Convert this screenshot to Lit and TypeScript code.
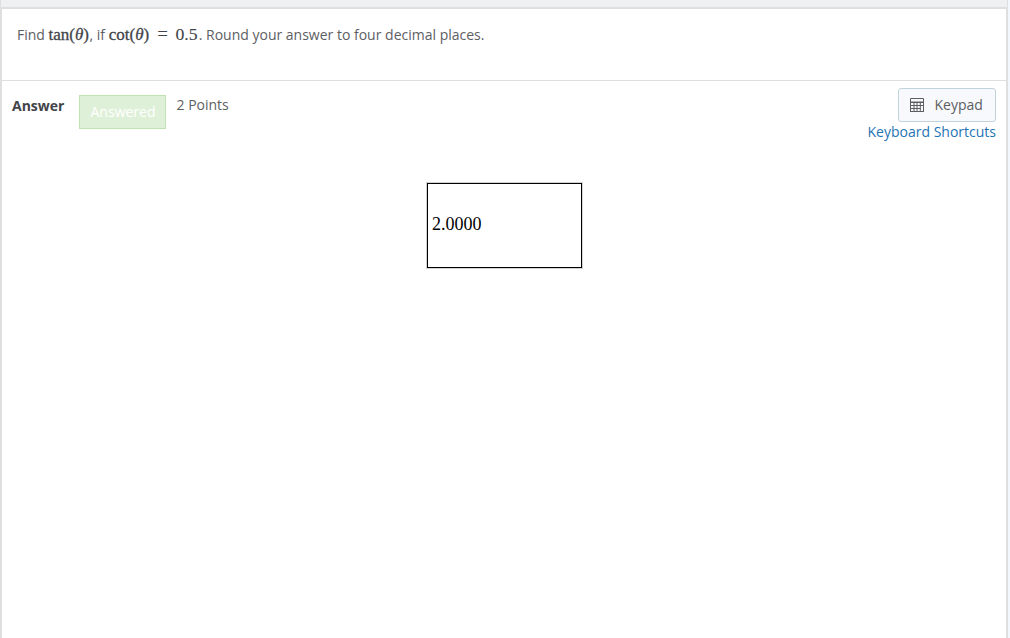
import { LitElement, html, css } from 'lit';
import { customElement, property } from 'lit/decorators.js';

@customElement('calc-icon')
class CalcIcon extends LitElement {
    static styles = css`
        :host {
            display: block;
            width: 14px;
            height: 14px;
        }

        svg {
            display: block;
        }
    `;

    render() {
        return html`
            <svg width="14" height="14" viewBox="0 0 14 14" fill="none">
                <path
                    d="M.5 .5h13v13H.5zM.5 4.5h13M.5 7.5h13M.5 10.5h10M4 4.5v9M7 4.5v9M10.3 4.5v9"
                    stroke="#5d5e63"
                />
                <path d="M0 4h14M0 13.5h14" stroke="#5d5e63" />
            </svg>
        `;
    }
}

@customElement('answer-bar')
class AnswerBar extends LitElement {
    @property({ type: Number }) points = 0;

    static styles = css`
        :host {
            display: flex;
            align-items: flex-start;
            padding: 7px 10px 0;
            color: #5d5e63;
        }

        .title {
            width: 67px;
            margin-top: 8px;
            color: #424449;
            font-weight: 700;
            line-height: 20px;
        }

        .status {
            box-sizing: border-box;
            width: 87px;
            height: 34px;
            margin-top: 7px;
            padding-left: 1px;
            border: 1px solid #c1e2b3;
            background-color: #dff0d8;
            color: #fff;
            line-height: 32px;
            text-align: center;
        }

        .points {
            margin: 7px 0 0 10.5px;
            line-height: 20px;
        }

        .tools {
            display: flex;
            flex-direction: column;
            align-items: flex-end;
            margin-left: auto;
        }

        button {
            display: flex;
            align-items: center;
            gap: 10.5px;
            box-sizing: border-box;
            width: 98px;
            height: 34px;
            padding: 0 11px;
            border: 1px solid #c3d3dc;
            border-radius: 3px;
            background-color: #f8f9fc;
            color: inherit;
            font: inherit;
        }

        a {
            color: #2474b5;
            line-height: 20px;
            text-decoration: none;
        }
    `;

    render() {
        return html`
            <span class="title">Answer</span>
            <span class="status">Answered</span>
            <span class="points">${this.points} Points</span>
            <div class="tools">
                <button><calc-icon></calc-icon>Keypad</button>
                <a>Keyboard Shortcuts</a>
            </div>
        `;
    }
}

@customElement('app-root')
class AppRoot extends LitElement {
    static styles = css`
        :host {
            display: flex;
            flex-direction: column;
            box-sizing: border-box;
            height: 638px;
            padding-right: 2px;
            overflow: hidden;
            background-color: #f2f7fe;
            font: 14px/20px 'Open Sans', sans-serif;
        }

        .strip {
            height: 7px;
            border: solid #dfdfe0;
            border-width: 0 1px;
            background-color: #eff0f2;
        }

        .panel {
            flex: 1;
            border: 2px solid #dfdfe0;
            border-bottom: 0;
            background-color: #fff;
        }

        .question {
            display: flex;
            box-sizing: border-box;
            height: 72px;
            padding: 16px 15px 0;
            border-bottom: 1px solid #dfdfe0;
            color: #5d5e63;
            line-height: 20px;
            white-space: pre;
        }

        .math {
            color: #424449;
            font: 17px/20px 'Liberation Serif', serif;
            -webkit-text-stroke: 0.3px #424449;
        }

        .tan {
            width: 41px;
        }

        .equation {
            width: 90px;
            margin-top: -1px;
        }

        .equals {
            margin: 0 7.5px 0 8px;
            font-size: 19px;
            line-height: 1;
            -webkit-text-stroke-width: 0;
        }

        .number {
            font-size: 17.7px;
            line-height: 1;
            -webkit-text-stroke-width: 0.1px;
        }

        .answer {
            display: flex;
            align-items: center;
            box-sizing: border-box;
            width: 155px;
            height: 85px;
            margin: 41px 424px 0 425px;
            padding: 0 4px 2px;
            border: 1px solid #000;
            outline: 1px solid #d3d3d3;
            color: #000;
            font: 18px 'Liberation Serif', serif;
        }
    `;

    render() {
        return html`
            <div class="strip"></div>
            <div class="panel">
                <div class="question"
                    ><span>Find </span
                    ><span class="math tan">tan(<i>θ</i>)</span
                    ><span>, if </span
                    ><span class="math equation">cot(<i>θ</i>)<span class="equals">=</span><span class="number">0.5</span></span
                    ><span>. Round your answer to four decimal places.</span
                ></div>
                <answer-bar .points=${2}></answer-bar>
                <div class="answer">2.0000</div>
            </div>
        `;
    }
}
